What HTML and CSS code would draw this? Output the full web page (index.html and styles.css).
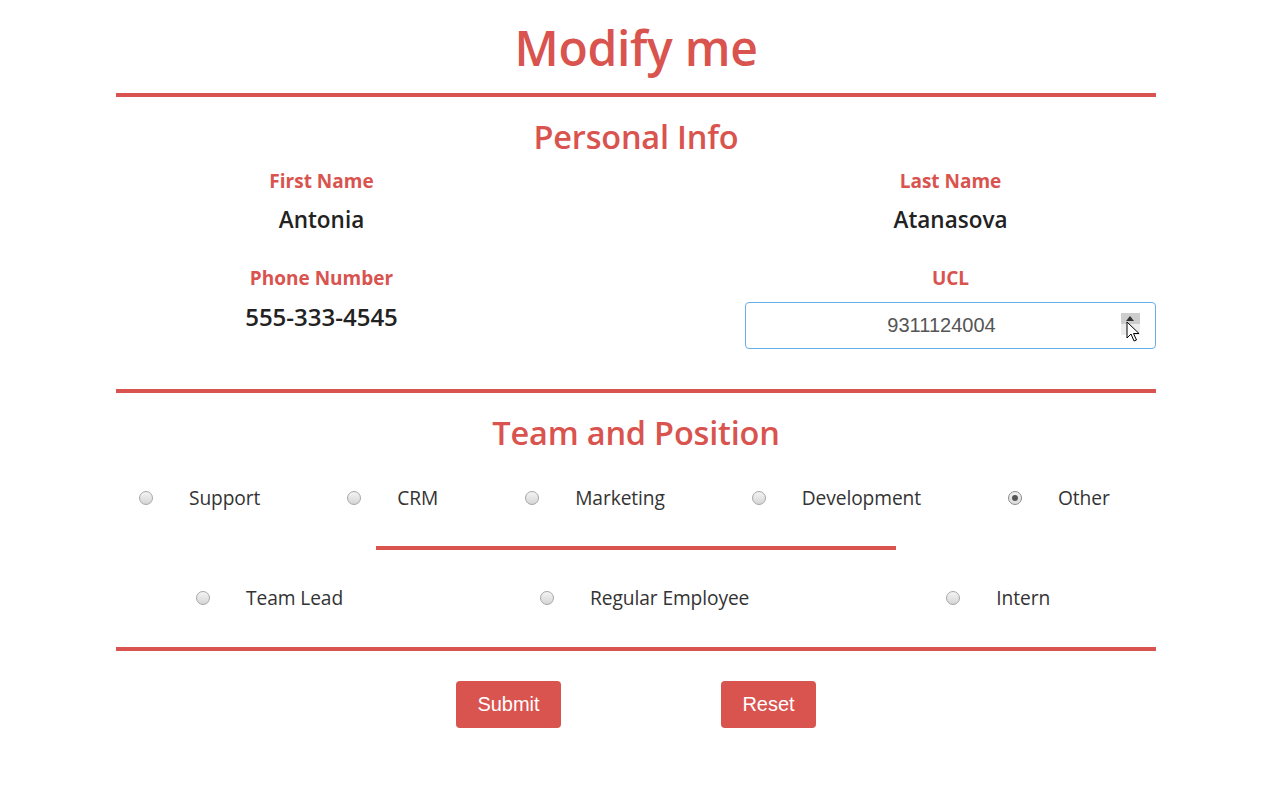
FILE: index.html
```html
<!DOCTYPE html>
<html lang="en">
<head>
<meta charset="utf-8">
<title>Modify me</title>
<link rel="stylesheet" href="styles.css">
</head>
<body>
<div class="page">
  <h1 class="title">Modify me</h1>
  <div class="rule"></div>

  <h2 class="section-title">Personal Info</h2>
  <div class="fields">
    <div class="field">
      <div class="label">First Name</div>
      <div class="value">Antonia</div>
    </div>
    <div class="field">
      <div class="label">Last Name</div>
      <div class="value">Atanasova</div>
    </div>
    <div class="field">
      <div class="label">Phone Number</div>
      <div class="value value-phone">555-333-4545</div>
    </div>
    <div class="field">
      <div class="label">UCL</div>
      <div class="input-wrap">
        <input class="num-input" type="text" value="9311124004">
        <div class="spinner">
          <div class="spin-up"></div>
          <div class="spin-down"></div>
        </div>
        <svg class="cursor" width="14" height="22" viewBox="0 0 14 22">
          <path d="M1 1 L1 17 L5 13 L8 20 L10.5 19 L7.5 12.5 L13 12.5 Z" fill="#fff" stroke="#000" stroke-width="1" stroke-linejoin="round"/>
        </svg>
      </div>
    </div>
  </div>
  <div class="rule rule-2"></div>

  <h2 class="section-title">Team and Position</h2>
  <div class="radio-row teams">
    <label class="radio"><span class="dot"></span><span class="rlabel">Support</span></label>
    <label class="radio"><span class="dot"></span><span class="rlabel">CRM</span></label>
    <label class="radio"><span class="dot"></span><span class="rlabel">Marketing</span></label>
    <label class="radio"><span class="dot"></span><span class="rlabel">Development</span></label>
    <label class="radio"><span class="dot checked"></span><span class="rlabel">Other</span></label>
  </div>
  <div class="rule-short"></div>
  <div class="radio-row positions">
    <label class="radio"><span class="dot"></span><span class="rlabel">Team Lead</span></label>
    <label class="radio"><span class="dot"></span><span class="rlabel">Regular Employee</span></label>
    <label class="radio"><span class="dot"></span><span class="rlabel">Intern</span></label>
  </div>
  <div class="rule rule-3"></div>

  <div class="buttons">
    <button class="btn btn-submit">Submit</button>
    <button class="btn btn-reset">Reset</button>
  </div>
</div>
</body>
</html>
```

FILE: styles.css
```css
html, body {
  margin: 0;
  padding: 0;
  background: #ffffff;
}

body {
  font-family: "Open Sans", "Noto Sans", sans-serif;
  color: #222;
}

.page {
  width: 1040px;
  margin-left: 116px;
  display: flex;
  flex-direction: column;
}

.title {
  margin: 0;
  padding-top: 18px;
  height: 75px;
  line-height: 60px;
  font-size: 48px;
  font-weight: 600;
  color: #d9534f;
  text-align: center;
  letter-spacing: -0.3px;
}

.rule {
  height: 4px;
  background: #d9534f;
}

.section-title {
  margin: 0;
  padding-top: 20px;
  line-height: 40px;
  font-size: 32.5px;
  font-weight: 600;
  color: #d9534f;
  text-align: center;
  letter-spacing: -0.2px;
}

.fields {
  margin-top: 12px;
  display: grid;
  grid-template-columns: 411px 411px;
  justify-content: space-between;
  row-gap: 14px;
}

.field {
  display: flex;
  flex-direction: column;
  align-items: center;
}

.label {
  line-height: 24px;
  font-size: 19px;
  font-weight: 700;
  color: #d9534f;
}

.value {
  margin-top: 12px;
  height: 47px;
  line-height: 30px;
  font-size: 22.5px;
  font-weight: 600;
  color: #222;
}

.value-phone {
  font-size: 24px;
}

.input-wrap {
  margin-top: 12px;
  position: relative;
  width: 411px;
  height: 47px;
}

.num-input {
  box-sizing: border-box;
  width: 100%;
  height: 47px;
  border: 1px solid #66afe9;
  border-radius: 4px;
  padding: 0 30px 0 12px;
  font-family: "Liberation Sans", Arial, sans-serif;
  font-size: 20px;
  color: #555;
  text-align: center;
  outline: none;
  background: #fff;
}

.spinner {
  position: absolute;
  left: 376px;
  top: 11px;
  width: 19px;
  height: 22px;
  display: flex;
  flex-direction: column;
}

.spin-up {
  height: 11px;
  background: #cdcdcd;
  position: relative;
}

.spin-up::after {
  content: "";
  position: absolute;
  left: 5px;
  top: 3px;
  border-left: 4px solid transparent;
  border-right: 4px solid transparent;
  border-bottom: 5px solid #333;
}

.spin-down {
  height: 11px;
  background: #ececec;
}

.cursor {
  position: absolute;
  left: 381px;
  top: 19px;
}

.rule-2 {
  margin-top: 40px;
}

.radio-row {
  display: flex;
  align-items: center;
  height: 40px;
}

.teams {
  margin-top: 25px;
  padding-left: 23px;
  gap: 87px;
}

.positions {
  margin-top: 28px;
  padding-left: 80px;
  gap: 197px;
}

.radio {
  display: flex;
  align-items: center;
  gap: 36px;
}

.dot {
  box-sizing: border-box;
  width: 14px;
  height: 14px;
  border-radius: 50%;
  border: 1px solid #a6a6a6;
  background: linear-gradient(#f4f4f4, #d6d6d6);
  position: relative;
}

.dot.checked {
  border-color: #8c8c8c;
  background: linear-gradient(#f2f2f2, #dcdcdc);
}

.dot.checked::after {
  content: "";
  position: absolute;
  left: 3px;
  top: 3px;
  width: 6px;
  height: 6px;
  border-radius: 50%;
  background: #555;
}

.rlabel {
  font-size: 19.2px;
  color: #333;
  line-height: 24px;
  letter-spacing: -0.1px;
}

.rule-short {
  margin-top: 28px;
  align-self: center;
  width: 520px;
  height: 4px;
  background: #d9534f;
}

.rule-3 {
  margin-top: 29px;
}

.buttons {
  margin-top: 30px;
  display: flex;
  justify-content: center;
  gap: 160px;
}

.btn {
  height: 47px;
  border: none;
  border-radius: 4px;
  background: #d9534f;
  color: #fff;
  font-family: "Liberation Sans", Arial, sans-serif;
  font-size: 20px;
  padding: 0;
}

.btn-submit {
  width: 105px;
}

.btn-reset {
  width: 95px;
}
```
